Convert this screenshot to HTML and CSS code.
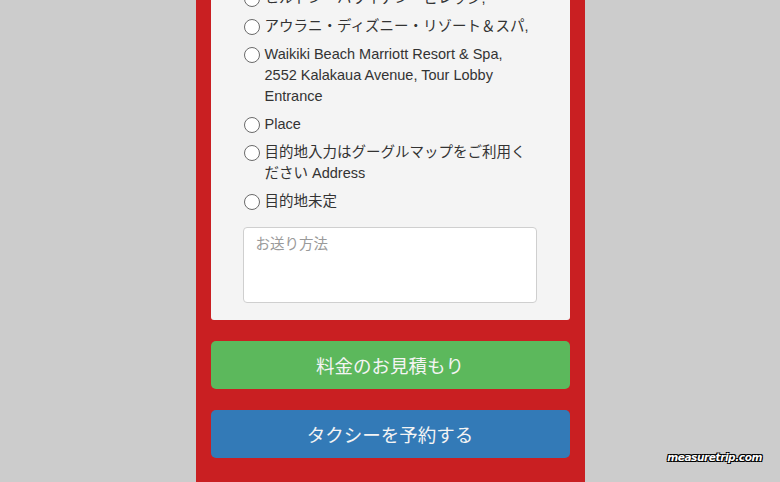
FILE: index.html
```html
<!DOCTYPE html>
<html lang="ja">
<head>
<meta charset="utf-8">
<title>Taxi</title>
<link rel="stylesheet" href="styles.css">
</head>
<body>
<div class="column">
  <div class="panel">
    <ul class="options">
      <li><input type="radio" name="dest"><span>ヒルトン・ハワイアン・ビレッジ,</span></li>
      <li><input type="radio" name="dest"><span>アウラニ・ディズニー・リゾート＆スパ,</span></li>
      <li><input type="radio" name="dest"><span>Waikiki Beach Marriott Resort &amp; Spa, 2552 Kalakaua Avenue, Tour Lobby Entrance</span></li>
      <li><input type="radio" name="dest"><span>Place</span></li>
      <li><input type="radio" name="dest"><span>目的地入力はグーグルマップをご利用ください Address</span></li>
      <li><input type="radio" name="dest"><span>目的地未定</span></li>
    </ul>
    <textarea class="field" placeholder="お送り方法"></textarea>
  </div>
  <button class="btn btn-green" type="button">料金のお見積もり</button>
  <button class="btn btn-blue" type="button">タクシーを予約する</button>
</div>
<div class="watermark">measuretrip.com</div>
</body>
</html>
```
FILE: styles.css
```css
html, body {
  margin: 0;
  padding: 0;
}
body {
  background: #cccccc;
  height: 482px;
  overflow: hidden;
  position: relative;
  font-family: "Liberation Sans", "Noto Sans CJK JP", sans-serif;
  color: #333333;
}
.column {
  width: 359px;
  margin: 0 auto;
  padding: 0 15px;
  background: #c91f22;
  height: 482px;
  overflow: hidden;
  display: flex;
  flex-direction: column;
}
.panel {
  background: #f4f4f4;
  border-radius: 0 0 3px 3px;
  margin-top: -20px;
  padding: 8px 33px 17px 32px;
}
.options {
  list-style: none;
  margin: 0;
  padding: 0;
}
.options li {
  display: flex;
  align-items: flex-start;
  font-size: 14.5px;
  line-height: 21px;
  margin-bottom: 7px;
}
.options li:last-child {
  margin-bottom: 15px;
}
.options input {
  appearance: none;
  -webkit-appearance: none;
  flex: none;
  width: 16px;
  height: 16px;
  margin: 3px 5px 0 1px;
  border: 1.2px solid #6a6a6a;
  border-radius: 50%;
  background: #ffffff;
  box-sizing: border-box;
}
.options span {
  max-width: 268px;
}
.field {
  display: block;
  flex: none;
  width: 294px;
  height: 76px;
  box-sizing: border-box;
  margin: 0;
  padding: 6px 12px;
  border: 1px solid #cfcfcf;
  border-radius: 4px;
  background: #ffffff;
  font-family: "Liberation Sans", "Noto Sans CJK JP", sans-serif;
  font-size: 14.5px;
  line-height: 20px;
  resize: none;
}
.field::placeholder {
  color: #9a9a9a;
}
.btn {
  display: block;
  flex: none;
  width: 100%;
  height: 48px;
  border: none;
  border-radius: 5px;
  color: #f4f4f4;
  font-family: "Liberation Sans", "Noto Sans CJK JP", sans-serif;
  font-size: 18.5px;
  margin-top: 21px;
  padding: 0;
}
.btn-green {
  background: #5cb85c;
}
.btn-blue {
  background: #337ab7;
}
.watermark {
  position: absolute;
  right: 18px;
  top: 451px;
  font-family: "DejaVu Sans", sans-serif;
  font-style: italic;
  font-weight: bold;
  font-size: 10.5px;
  color: #ffffff;
  letter-spacing: -0.4px;
  text-shadow: 1px 1px 0 #000, -1px -1px 0 #000, 1px -1px 0 #000, -1px 1px 0 #000;
}
```
